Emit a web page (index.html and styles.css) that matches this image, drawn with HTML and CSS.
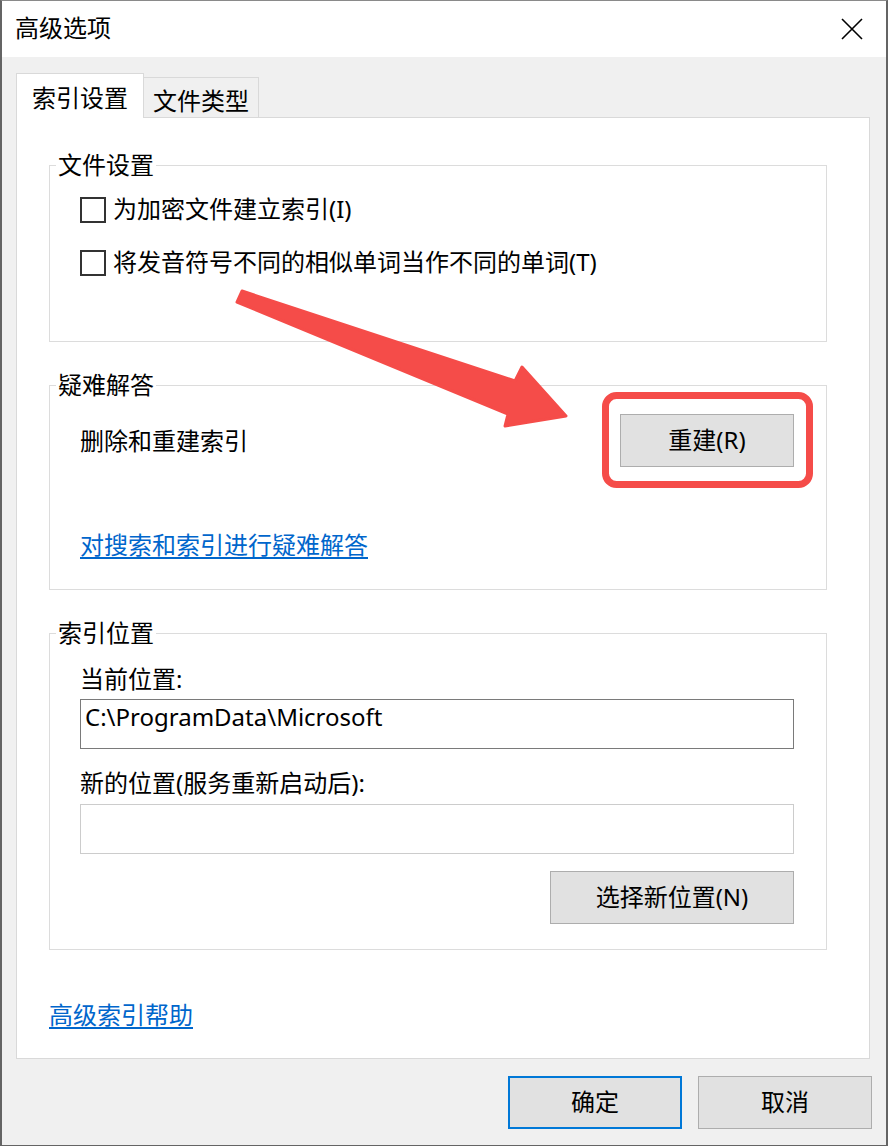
FILE: index.html
```html
<!DOCTYPE html>
<html lang="zh-CN">
<head>
<meta charset="utf-8">
<title>高级选项</title>
<link rel="stylesheet" href="styles.css">
</head>
<body>
<div class="window">
  <div class="titlebar">
    <span class="title">高级选项</span>
    <svg class="close" width="22" height="22" viewBox="0 0 22 22"><path d="M1 1 L21 21 M21 1 L1 21" stroke="#000" stroke-width="1.6" fill="none"/></svg>
  </div>
  <div class="body">
    <div class="tabs">
      <div class="tab active">索引设置</div>
      <div class="tab">文件类型</div>
    </div>
    <div class="panel">
      <fieldset class="group g1">
        <legend>文件设置</legend>
        <div class="content">
          <label class="check"><span class="box"></span>为加密文件建立索引(I)</label>
          <label class="check second"><span class="box"></span>将发音符号不同的相似单词当作不同的单词(T)</label>
        </div>
      </fieldset>
      <fieldset class="group g2">
        <legend>疑难解答</legend>
        <div class="content">
          <div class="row">
            <span>删除和重建索引</span>
            <button class="btn rebuild">重建(R)</button>
          </div>
          <a class="link trouble" href="#">对搜索和索引进行疑难解答</a>
        </div>
      </fieldset>
      <fieldset class="group g3">
        <legend>索引位置</legend>
        <div class="content">
          <div class="label">当前位置:</div>
          <div class="field">C:\ProgramData\Microsoft</div>
          <div class="label label2">新的位置(服务重新启动后):</div>
          <div class="field empty"></div>
          <div class="btnrow"><button class="btn choose">选择新位置(N)</button></div>
        </div>
      </fieldset>
      <a class="link help" href="#">高级索引帮助</a>
    </div>
    <div class="footer">
      <button class="btn ok">确定</button>
      <button class="btn">取消</button>
    </div>
  </div>
  <svg class="annot" width="888" height="1146" viewBox="0 0 888 1146">
    <polygon points="242,291 515,381 522,367 566,416 505,426 508,414 237,302" fill="#f54c49" stroke="#f54c49" stroke-width="3" stroke-linejoin="round"/>
    <rect x="605.5" y="395.5" width="204" height="89" rx="11" ry="11" fill="none" stroke="#f54c49" stroke-width="7"/>
  </svg>
</div>
</body>
</html>
```

FILE: styles.css
```css
* { box-sizing: border-box; }
html, body { margin: 0; padding: 0; background: #ffffff; }
body {
  font-family: "Noto Sans", "Noto Sans CJK SC", sans-serif;
  font-size: 24px;
  color: #000;
}
.window {
  position: relative;
  width: 888px;
  height: 1146px;
  border-left: 2px solid #646464;
  border-right: 2px solid #646464;
  border-top: 1px solid #8a8a8a;
  border-bottom: 1px solid #646464;
  display: flex;
  flex-direction: column;
  background: #f0f0f0;
}
.titlebar {
  height: 56px;
  background: #fff;
  display: flex;
  align-items: center;
  justify-content: space-between;
  padding: 0 23px 2px 13px;
}
.title { line-height: 30px; }
.close { display: block; margin-top: 1px; }
.body {
  flex: 1;
  padding: 16px 16px 16px 14px;
  display: flex;
  flex-direction: column;
}
.tabs {
  display: flex;
  align-items: flex-end;
  height: 44px;
}
.tab {
  width: 115px;
  height: 40px;
  border: 1px solid #d9d9d9;
  border-bottom: none;
  border-left: none;
  background: #f0f0f0;
  display: flex;
  align-items: center;
  justify-content: center;
  padding-top: 3px;
}
.tab.active {
  width: 128px;
  height: 45px;
  border-left: 1px solid #d9d9d9;
  background: #fff;
  margin-bottom: -1px;
  position: relative;
  z-index: 1;
  padding-top: 0;
}
.panel {
  height: 942px;
  background: #fff;
  border: 1px solid #d9d9d9;
  padding: 32px 42px 0 32px;
  display: flex;
  flex-direction: column;
}
.group {
  margin: 0;
  padding: 0 0 0 6px;
  border: 1px solid #dcdcdc;
  min-width: 0;
}
.group legend {
  padding: 0 2px;
  line-height: 30px;
  height: 30px;
}
.content { padding-left: 24px; padding-right: 32px; }
.g1 { height: 192px; }
.g2 { height: 220px; margin-top: 28px; }
.g3 { height: 332px; margin-top: 28px; }
.g1 .content { padding-top: 14px; }
.check {
  display: flex;
  align-items: center;
  height: 30px;
  line-height: 30px;
}
.check .box { margin-top: 2px; }
.check.second { margin-top: 23px; }
.box {
  width: 26px;
  height: 26px;
  border: 2px solid #333;
  background: #fff;
  margin-right: 7px;
  flex: none;
}
.g2 .content { padding-top: 14px; }
.row {
  display: flex;
  align-items: center;
  justify-content: space-between;
  height: 53px;
}
.row span { margin-top: -2px; }
.btn {
  font: inherit;
  color: #000;
  background: #e1e1e1;
  border: 1px solid #adadad;
  height: 53px;
  width: 174px;
  padding: 0 0 2px;
  line-height: 30px;
  border-radius: 0;
}
.link {
  color: #0066cc;
  text-decoration: underline;
  text-underline-offset: 3px;
  line-height: 30px;
  display: inline-block;
}
.trouble { margin-top: 63px; }
.g3 .content { padding-top: 16px; }
.label { line-height: 30px; }
.label2 { margin-top: 19px; }
.field {
  margin-top: 5px;
  height: 50px;
  border: 1px solid #7a7a7a;
  background: #fff;
  padding: 2px 4px;
  line-height: 30px;
}
.field.empty { border-color: #cccccc; margin-top: 6px; }
.btnrow { display: flex; justify-content: flex-end; margin-top: 17px; }
.choose { width: 244px; }
.help { margin-top: 50px; align-self: flex-start; }
.footer {
  display: flex;
  justify-content: flex-end;
  gap: 16px;
  margin-top: 17px;
  margin-right: -2px;
}
.footer .btn { width: 174px; height: 53px; }
.btn.ok { border: 2px solid #0078d7; }
.annot {
  position: absolute;
  left: -2px;
  top: -1px;
  pointer-events: none;
}
```
